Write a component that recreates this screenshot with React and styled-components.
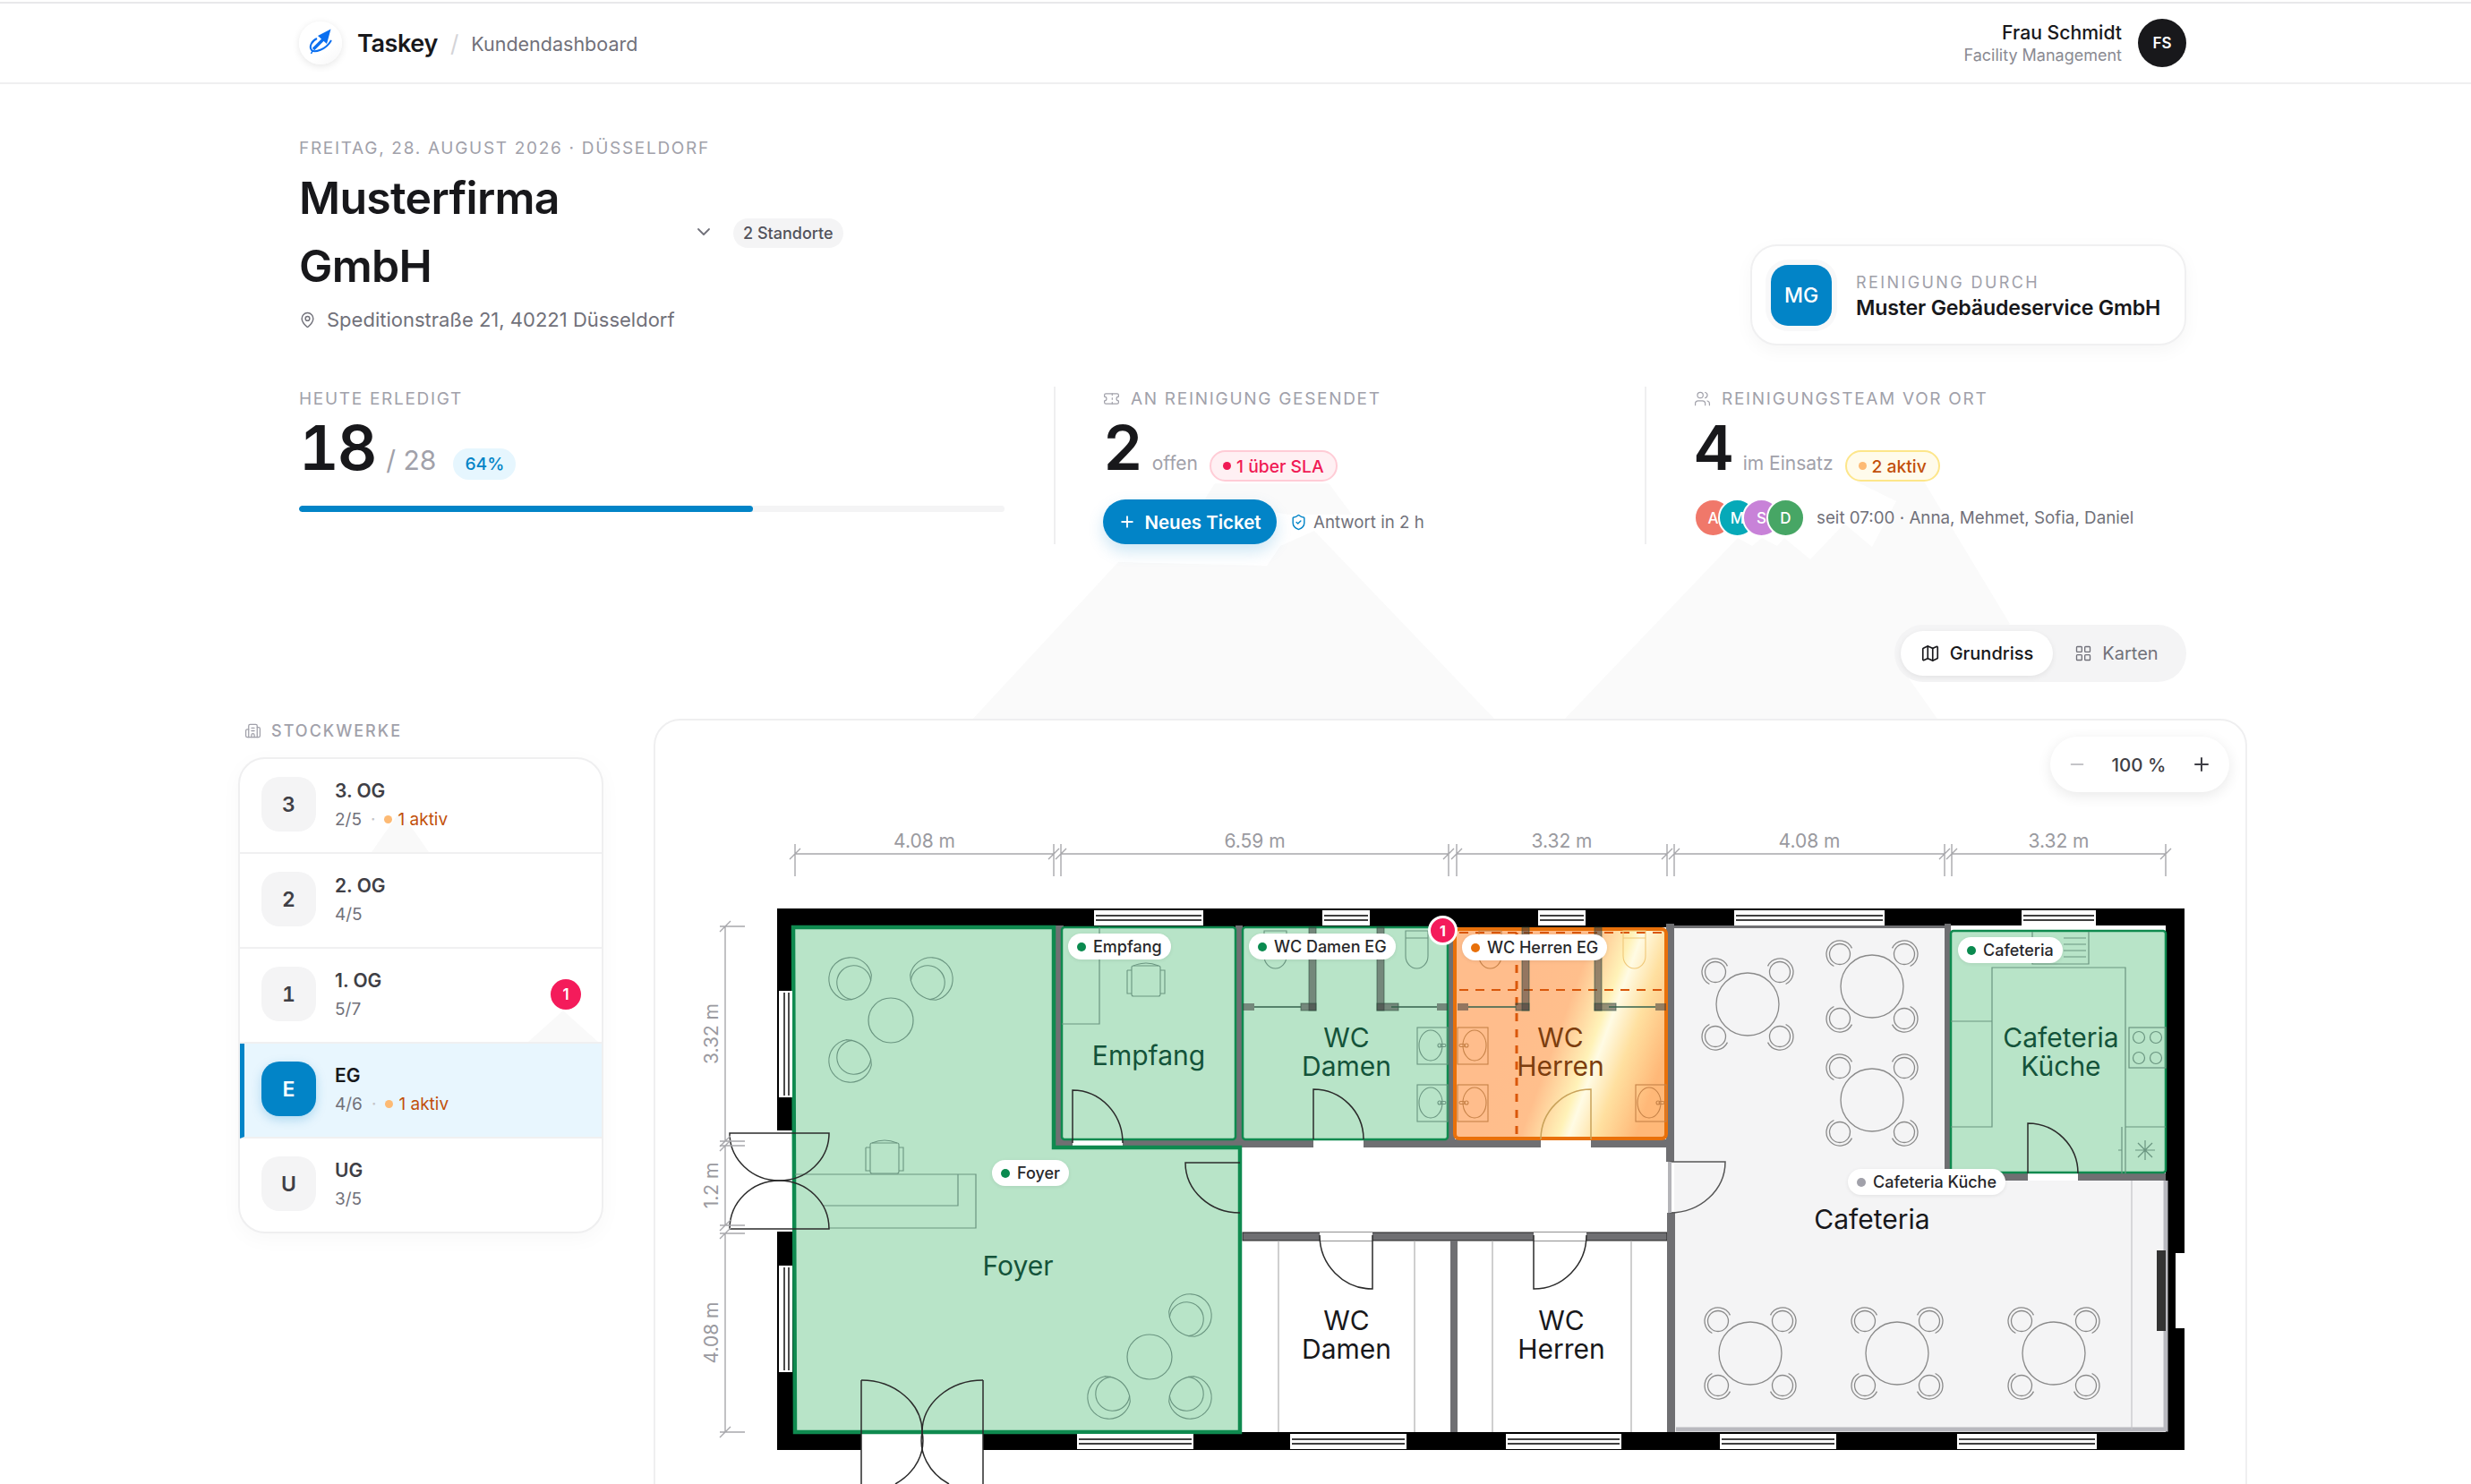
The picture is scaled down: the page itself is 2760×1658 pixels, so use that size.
import React from 'react'
import styled, { createGlobalStyle } from 'styled-components'
import { ChevronDown, MapPin, Ticket, Users, Plus, Minus, ShieldCheck, Map as MapIcon, LayoutGrid, Building2 } from 'lucide-react'

const FLOORS = [
  { badge: '3', name: '3. OG', done: '2/5', active: '1 aktiv', peak: { left: 147, width: 64, height: 46 } },
  { badge: '2', name: '2. OG', done: '4/5' },
  { badge: '1', name: '1. OG', done: '5/7', alert: 1, peak: { left: 322, width: 78, height: 35 } },
  { badge: 'E', name: 'EG', done: '4/6', active: '1 aktiv', selected: true },
  { badge: 'U', name: 'UG', done: '3/5' },
]

const TEAM = [
  { initial: 'A', color: '#f0786a' },
  { initial: 'M', color: '#06a9b8' },
  { initial: 'S', color: '#c882d8' },
  { initial: 'D', color: '#47a665' },
]

const CHIPS = [
  { label: 'Empfang', x: 1193, y: 1044, dot: '#0a8a4f' },
  { label: 'Foyer', x: 1108, y: 1297, dot: '#0a8a4f' },
  { label: 'WC Damen EG', x: 1395, y: 1044, dot: '#0a8a4f' },
  { label: 'WC Herren EG', x: 1633, y: 1045, dot: '#e8700a' },
  { label: 'Cafeteria', x: 2187, y: 1048, dot: '#0a8a4f' },
  { label: 'Cafeteria Küche', x: 2064, y: 1307, dot: '#a1a1aa' },
]

const TOP_WINDOWS = [[1222, 1344], [1477, 1530], [1718, 1771], [1937, 2105], [2258, 2341]]
const BOTTOM_WINDOWS = [[1203, 1333], [1441, 1571], [1682, 1811], [1921, 2051], [2186, 2342]]
const LEFT_WINDOWS = [[1107, 1226], [1414, 1533]]

const DIM_TOP = [
  { from: 888, to: 1177, label: '4.08 m' },
  { from: 1185, to: 1618, label: '6.59 m' },
  { from: 1627, to: 1862, label: '3.32 m' },
  { from: 1870, to: 2172, label: '4.08 m' },
  { from: 2180, to: 2419, label: '3.32 m' },
]

const DIM_LEFT = [
  { from: 1035, to: 1275, label: '3.32 m' },
  { from: 1280, to: 1369, label: '1.2 m' },
  { from: 1378, to: 1600, label: '4.08 m' },
]

const CAFE_TABLES = [
  [1952, 1122, 35], [2091, 1102, 35], [2091, 1229, 35],
  [1955, 1512, 35], [2119, 1512, 35], [2294, 1512, 35],
]

function arcPoint(cx, cy, r, angle) {
  return [cx + r * Math.cos(angle), cy + r * Math.sin(angle)]
}

function CafeTable({ x, y, r }) {
  const offsets = [[-36, -36], [36, -36], [-36, 36], [36, 36]]
  return (
    <g fill='none' stroke='#8a8a8a' strokeWidth='1.3'>
      <circle cx={x} cy={y} r={r} />
      {offsets.map(([dx, dy]) => {
        const cx = x + dx
        const cy = y + dy
        const out = Math.atan2(dy, dx)
        const [ax, ay] = arcPoint(cx, cy, 15, out - 1.9)
        const [bx, by] = arcPoint(cx, cy, 15, out + 1.9)
        return (
          <g key={`${dx}${dy}`}>
            <circle cx={cx} cy={cy} r='11.5' />
            <path d={`M${ax} ${ay} A15 15 0 1 1 ${bx} ${by}`} />
          </g>
        )
      })}
    </g>
  )
}

// lounge chair, rotated so the seat looks at the table
function Armchair({ x, y, tx, ty }) {
  const angle = (Math.atan2(ty - y, tx - x) * 180) / Math.PI - 90
  return (
    <g transform={`translate(${x} ${y}) rotate(${angle})`} fill='none' stroke='#6a9580' strokeWidth='1.1'>
      <path d='M-20 13 A24 24 0 1 1 20 13 L15 17 M-20 13 L-15 17' />
      <path d='M-15 17 A19 19 0 1 1 15 17 Q0 26 -15 17 Z' />
    </g>
  )
}

function OfficeChair({ x, y, stroke }) {
  return (
    <g transform={`translate(${x} ${y})`} fill='none' stroke={stroke} strokeWidth='1.1'>
      <rect x='-16' y='-17' width='32' height='34' rx='2' />
      <path d='M-21 -12 L-16 -12 M-21 -12 L-21 14 L-16 14 M16 -12 L21 -12 L21 14 L16 14' />
      <path d='M-14 -17 Q0 -23 14 -17' />
    </g>
  )
}

function Sink({ x, y, flip, stroke }) {
  const cx = flip ? x + 19 : x + 15
  const tap = flip ? x + 6 : x + 25
  return (
    <g fill='none' stroke={stroke} strokeWidth='1.1'>
      <rect x={x} y={y} width='34' height='41' />
      <ellipse cx={cx} cy={y + 20} rx='13' ry='17' />
      <circle cx={tap + (flip ? 4 : 0)} cy={y + 20} r='2' />
      <rect x={flip ? x + 2 : x + 26} y={y + 18.5} width='6' height='3' rx='1.5' />
    </g>
  )
}

function Toilet({ x, stroke }) {
  return (
    <g fill='none' stroke={stroke} strokeWidth='1.1'>
      <path d={`M${x} 1040 H${x + 25} V1068 A12.5 14 0 0 1 ${x} 1068 Z M${x} 1048 H${x + 25}`} />
    </g>
  )
}

function Stall({ x, foot }) {
  const footX = foot < 0 ? x + foot : x
  const width = 8 + Math.abs(foot)
  return (
    <g fill='#3d3d3d' fillOpacity='0.55' stroke='#2c4d3c' strokeOpacity='0.6' strokeWidth='1'>
      <rect x={x} y='1036' width='8' height='93' />
      <rect x={footX} y='1121' width={width} height='8' />
    </g>
  )
}

function Window({ x1, x2, y1, y2, vertical }) {
  if (vertical) {
    return (
      <g>
        <rect x={x1} y={y1} width={x2 - x1} height={y2 - y1} fill='#fff' />
        <path d={`M${x1 + 6} ${y1 + 2} V${y2 - 2} M${x1 + 11} ${y1 + 2} V${y2 - 2}`} stroke='#000' strokeWidth='1.4' />
      </g>
    )
  }
  return (
    <g>
      <rect x={x1} y={y1} width={x2 - x1} height={y2 - y1} fill='#fff' />
      <path d={`M${x1 + 2} ${y1 + 6} H${x2 - 2} M${x1 + 2} ${y1 + 11} H${x2 - 2}`} stroke='#000' strokeWidth='1.4' />
    </g>
  )
}

function FloorPlan() {
  const line = '#2b2b2b'
  const greenLine = '#6a9580'
  const orangeLine = '#c68248'
  const wall = '#6f6f72'
  return (
    <PlanSvg viewBox='732 805 1776 853' width='1776' height='853'>
      <defs>
        <linearGradient id='heat' gradientUnits='userSpaceOnUse' x1='1699' y1='1119' x2='1869' y2='1181'>
          <stop offset='0' stopColor='#ffbd8c' />
          <stop offset='0.28' stopColor='#ffbf8c' />
          <stop offset='0.5' stopColor='#fff2b8' />
          <stop offset='0.56' stopColor='#fffbe4' />
          <stop offset='0.72' stopColor='#ffe0a0' />
          <stop offset='0.95' stopColor='#ffb878' />
        </linearGradient>
      </defs>

      {/* shell */}
      <rect x='868' y='1015' width='1572' height='605' fill='#000' />
      <rect x='886' y='1036' width='1533' height='564' fill='#fff' />

      {/* cafeteria floor */}
      <path d='M1870 1036 H2179 V1319 H2419 V1600 H1870 Z' fill='#f4f4f5' />
      <path d='M2419 1319 V1597 H1872' fill='none' stroke='#b9b9bf' strokeWidth='5' />
      <path d='M2381 1319 V1597' stroke='#c4c4c8' strokeWidth='1.2' />

      {/* grey walls */}
      <rect x='1177' y='1034' width='11' height='248' fill={wall} />
      <rect x='1380' y='1034' width='8' height='248' fill={wall} />
      <rect x='1617' y='1034' width='8' height='248' fill={wall} />
      <rect x='1861' y='1032' width='9' height='266' fill={wall} />
      <rect x='1177' y='1273' width='693' height='9' fill={wall} />
      <rect x='1870' y='1034' width='302' height='3' fill={wall} />
      <rect x='2172' y='1032' width='7' height='287' fill={wall} />
      <rect x='2172' y='1311' width='247' height='8' fill={wall} />
      <rect x='1388' y='1377' width='474' height='9' fill={wall} stroke='#222' strokeWidth='1' />
      <rect x='1620' y='1386' width='8' height='214' fill={wall} />
      <rect x='1862' y='1355' width='9' height='245' fill={wall} />
      <rect x='2179' y='1034' width='240' height='6' fill='#fff' />

      {/* door openings */}
      <rect x='1198' y='1273' width='56' height='9' fill='#fff' />
      <rect x='1467' y='1273' width='56' height='9' fill='#fff' />
      <rect x='1721' y='1273' width='56' height='9' fill='#fff' />
      <rect x='1474' y='1377' width='59' height='9' fill='#fff' />
      <rect x='1713' y='1377' width='59' height='9' fill='#fff' />
      <rect x='2265' y='1311' width='56' height='8' fill='#fff' />
      <rect x='866' y='1263' width='22' height='113' fill='#fff' />
      <rect x='962' y='1598' width='136' height='24' fill='#fff' />

      {/* rooms */}
      <path d='M886 1036 H1177 V1282 H1385 V1600 H888 Z' fill='#b8e4c8' stroke='#0f8a4f' strokeWidth='4.5' />
      <rect x='1186' y='1036' width='194' height='237' rx='3' fill='#b8e4c8' stroke='#0f8a4f' strokeWidth='2.5' />
      <rect x='1388' y='1036' width='229' height='237' rx='3' fill='#b8e4c8' stroke='#0f8a4f' strokeWidth='2.5' />
      <rect x='2179' y='1040' width='240' height='270' rx='3' fill='#b8e4c8' stroke='#0f8a4f' strokeWidth='2.5' />
      <rect x='1625' y='1038' width='236' height='234' rx='5' fill='url(#heat)' stroke='#e8700a' strokeWidth='4' />
      <path d='M1630 1106 H1860' stroke='#d9570a' strokeWidth='2' strokeDasharray='10 8' />
      <path d='M1694 1042 V1268' stroke='#d9570a' strokeWidth='3' strokeDasharray='9 9' />
      <path d='M1630 1042 H1858' stroke='#d9570a' strokeWidth='2' strokeDasharray='10 8' />

      {/* windows */}
      {TOP_WINDOWS.map(([a, b]) => <Window key={a} x1={a} x2={b} y1={1017} y2={1034} />)}
      {BOTTOM_WINDOWS.map(([a, b]) => <Window key={a} x1={a} x2={b} y1={1602} y2={1619} />)}
      {LEFT_WINDOWS.map(([a, b]) => <Window key={a} vertical x1={870} x2={885} y1={a} y2={b} />)}
      <rect x='2409' y='1397' width='10' height='90' fill='#333' />
      <rect x='2430' y='1400' width='11' height='84' fill='#fff' />

      {/* foyer furniture */}
      <g fill='none' stroke={greenLine} strokeWidth='1.2'>
        <circle cx='995' cy='1140' r='25' />
        <circle cx='1284' cy='1516' r='25' />
        <path d='M888 1312 H1090 V1372 H926 M919 1347 H1070 V1312' />
        <path d='M1228 1036 V1144 H1186' />
        <path d='M2179 1141 H2225 V1081 H2374 V1311 M2225 1141 V1259 H2179 M2374 1259 H2419 M2370 1259 V1311 M2366 1285 H2370' />
        <rect x='2378' y='1148' width='41' height='45' />
        <circle cx='2389' cy='1159' r='6.5' />
        <circle cx='2408' cy='1159' r='6.5' />
        <circle cx='2389' cy='1182' r='6.5' />
        <circle cx='2408' cy='1182' r='6.5' />
        <path d='M2270 1041 V1077 H2333 V1041 M2305 1048 H2330 M2305 1055 H2330 M2305 1062 H2330 M2305 1069 H2330' />
        <path d='M2396 1274 V1296 M2385 1285 H2407 M2388 1277 L2404 1293 M2404 1277 L2388 1293' />
      </g>
      <Armchair x={950} y={1094} tx={995} ty={1140} />
      <Armchair x={1040} y={1094} tx={995} ty={1140} />
      <Armchair x={950} y={1185} tx={995} ty={1140} />
      <Armchair x={1329} y={1470} tx={1284} ty={1516} />
      <Armchair x={1239} y={1561} tx={1284} ty={1516} />
      <Armchair x={1329} y={1561} tx={1284} ty={1516} />
      <OfficeChair x={988} y={1294} stroke={greenLine} />
      <OfficeChair x={1280} y={1096} stroke={greenLine} />

      {/* wc upstairs fittings */}
      <Stall x={1462} foot={-9} />
      <Stall x={1538} foot={16} />
      <Stall x={1700} foot={-7} />
      <Stall x={1781} foot={16} />
      <g fill='#3d3d3d' fillOpacity='0.55'>
        <rect x='1388' y='1121' width='13' height='8' />
        <rect x='1605' y='1121' width='12' height='8' />
        <rect x='1628' y='1121' width='12' height='8' />
        <rect x='1849' y='1121' width='12' height='8' />
      </g>
      <path d='M1401 1125 H1453 M1554 1125 H1605 M1640 1125 H1693 M1797 1125 H1849' stroke='#35624c' strokeWidth='1.4' />
      <Toilet x={1412} stroke={greenLine} />
      <Toilet x={1570} stroke={greenLine} />
      <Toilet x={1652} stroke={orangeLine} />
      <Toilet x={1813} stroke='#f0c878' />
      <Sink x={1583} y={1148} stroke={greenLine} />
      <Sink x={1583} y={1212} stroke={greenLine} />
      <Sink x={1628} y={1148} flip stroke={orangeLine} />
      <Sink x={1628} y={1212} flip stroke={orangeLine} />
      <Sink x={1827} y={1212} stroke={orangeLine} />

      {/* wc downstairs */}
      <path d='M1428 1386 V1600 M1580 1386 V1600 M1667 1386 V1600 M1822 1386 V1600' stroke='#a8a8a8' strokeWidth='1.1' />

      {/* cafeteria tables */}
      {CAFE_TABLES.map(([x, y, r]) => <CafeTable key={`${x}${y}`} x={x} y={y} r={r} />)}

      {/* doors */}
      <g fill='none' stroke={line} strokeWidth='1.5'>
        <path d='M1198 1277 V1218 A56 59 0 0 1 1254 1277' />
        <path d='M1467 1273 V1217 A56 56 0 0 1 1523 1273' />
        <path d='M1777 1273 V1217 A56 56 0 0 0 1721 1273' stroke='#c9a25a' />
        <path d='M2265 1311 V1255 A56 56 0 0 1 2321 1311' />
        <path d='M1533 1380 V1440 A59 60 0 0 1 1474 1380' />
        <path d='M1713 1380 V1440 A59 60 0 0 0 1772 1380' />
        <path d='M1385 1299 H1324 A61 56 0 0 0 1385 1355' />
        <path d='M1865 1298 H1927 A62 57 0 0 1 1865 1355' stroke='#555' />
        <path d='M1865 1298 V1355' stroke='#b4b4b8' strokeWidth='4' />
        <path d='M815 1266 H926 A55.5 53 0 0 1 815 1266 Z' />
        <path d='M815 1373 H926 A55.5 54 0 0 0 815 1373 Z' />
        <path d='M962 1542 V1658 M1098 1542 V1658' />
        <path d='M962 1542 A68 58 0 0 1 1030 1600 A68 58 0 0 1 1000 1658' />
        <path d='M1098 1542 A68 58 0 0 0 1030 1600 A68 58 0 0 0 1060 1658' />
      </g>

      {/* room names */}
      <RoomName x='1283' y='1190' fill='#14533a'>Empfang</RoomName>
      <RoomName x='1137' y='1425' fill='#14533a'>Foyer</RoomName>
      <RoomName x='1504' y='1170' fill='#14533a'>WC</RoomName>
      <RoomName x='1504' y='1202' fill='#14533a'>Damen</RoomName>
      <RoomName x='1743' y='1170' fill='#7c3d0e'>WC</RoomName>
      <RoomName x='1743' y='1202' fill='#7c3d0e'>Herren</RoomName>
      <RoomName x='2302' y='1170' fill='#14533a'>Cafeteria</RoomName>
      <RoomName x='2302' y='1202' fill='#14533a'>Küche</RoomName>
      <RoomName x='2091' y='1373' fill='#18181b'>Cafeteria</RoomName>
      <RoomName x='1504' y='1486' fill='#18181b'>WC</RoomName>
      <RoomName x='1504' y='1518' fill='#18181b'>Damen</RoomName>
      <RoomName x='1744' y='1486' fill='#18181b'>WC</RoomName>
      <RoomName x='1744' y='1518' fill='#18181b'>Herren</RoomName>

      {/* dimensions */}
      <g fill='none' stroke='#a8a8ac' strokeWidth='1.4'>
        {DIM_TOP.map((d) => (
          <path key={d.from} d={`M${d.from} 954 H${d.to} M${d.from} 943 V979 M${d.to} 943 V979 M${d.from - 6} 960 L${d.from + 6} 948 M${d.to - 6} 960 L${d.to + 6} 948`} />
        ))}
        {DIM_LEFT.map((d) => (
          <path key={d.from} d={`M810 ${d.from} V${d.to} M804 ${d.from} H832 M804 ${d.to} H832 M804 ${d.from + 6} L816 ${d.from - 6} M804 ${d.to + 6} L816 ${d.to - 6}`} />
        ))}
      </g>
      {DIM_TOP.map((d) => <DimText key={d.from} x={(d.from + d.to) / 2} y='947'>{d.label}</DimText>)}
      {DIM_LEFT.map((d) => {
        const mid = (d.from + d.to) / 2
        return <DimText key={d.from} x='802' y={mid} transform={`rotate(-90 802 ${mid})`}>{d.label}</DimText>
      })}
    </PlanSvg>
  )
}

function Logo() {
  return (
    <LogoDisc>
      <svg width='48' height='48' viewBox='4 4 48 48' fill='none'>
        <path d='M39.5 12.5 L25 20 L35 29 Z' fill='#0a6ff0' />
        <path d='M31 24 L20 35' stroke='#0a6ff0' strokeWidth='3.4' />
        <path d='M24 23 C18 26 15 32 18 36 C21 39 34 36 40 25' stroke='#0a6ff0' strokeWidth='2' />
        <path d='M17.5 40 L19.5 36' stroke='#0a6ff0' strokeWidth='1.6' />
      </svg>
    </LogoDisc>
  )
}

function App() {
  return (
    <Page>
      <GlobalStyle />
      <Backdrop viewBox='0 0 2760 1658' width='2760' height='1658'>
        <path d='M1084 806 L1249 628 L1415 632 L1430 610 L1468 593 L1672 806 Z' />
        <path d='M1357 540 H1484 L1510 575 H1440 L1345 559 Z' />
        <path d='M1745 806 L1941 601 L1957 610 L1968 601 L1985 610 L1993 601 L2022 625 L2060 585 L2091 611 L2118 560 L2073 538 H2149 L2245 697 L2130 755 L2166 806 Z' />
      </Backdrop>

      <Header>
        <Brand>
          <Logo />
          <BrandName>Taskey</BrandName>
          <BrandSlash>/</BrandSlash>
          <BrandSub>Kundendashboard</BrandSub>
        </Brand>
        <UserBox>
          <UserText>
            <UserName>Frau Schmidt</UserName>
            <UserRole>Facility Management</UserRole>
          </UserText>
          <UserAvatar>FS</UserAvatar>
        </UserBox>
      </Header>

      <Main>
        <Hero>
          <HeroIntro>
            <Eyebrow>FREITAG, 28. AUGUST 2026 · DÜSSELDORF</Eyebrow>
            <TitleRow>
              <Title>Musterfirma GmbH</Title>
              <ChevronDown size={24} color='#71717a' strokeWidth={1.8} />
              <SitesPill>2 Standorte</SitesPill>
            </TitleRow>
            <Address>
              <MapPin size={19} strokeWidth={1.8} />
              Speditionstraße 21, 40221 Düsseldorf
            </Address>
          </HeroIntro>
          <VendorCard>
            <VendorLogo>MG</VendorLogo>
            <div>
              <VendorLabel>REINIGUNG DURCH</VendorLabel>
              <VendorName>Muster Gebäudeservice GmbH</VendorName>
            </div>
          </VendorCard>
        </Hero>

        <Stats>
          <StatCol>
            <StatLabel>HEUTE ERLEDIGT</StatLabel>
            <StatRow>
              <BigNumber>18</BigNumber>
              <StatTotal>/ 28</StatTotal>
              <Pill $bg='#e6f6fe' $color='#0284c7'>64%</Pill>
            </StatRow>
            <Progress>
              <ProgressFill style={{ width: `${(18 / 28) * 100}%` }} />
            </Progress>
          </StatCol>

          <StatCol $divided>
            <StatLabel>
              <Ticket size={19} strokeWidth={1.5} />
              AN REINIGUNG GESENDET
            </StatLabel>
            <StatRow>
              <BigNumber>2</BigNumber>
              <StatNote>offen</StatNote>
              <Pill $bg='#fff0f3' $color='#f01a55' $border='#ffccd6'>
                <PillDot $color='#f01a55' />
                1 über SLA
              </Pill>
            </StatRow>
            <ActionRow>
              <PrimaryButton>
                <Plus size={20} strokeWidth={2.2} />
                Neues Ticket
              </PrimaryButton>
              <ShieldCheck size={19} color='#0284c7' strokeWidth={1.8} />
              <ResponseText>Antwort in 2 h</ResponseText>
            </ActionRow>
          </StatCol>

          <StatCol $divided>
            <StatLabel>
              <Users size={19} strokeWidth={1.5} />
              REINIGUNGSTEAM VOR ORT
            </StatLabel>
            <StatRow>
              <BigNumber>4</BigNumber>
              <StatNote>im Einsatz</StatNote>
              <Pill $bg='#fffbeb' $color='#c2500a' $border='#fde68a'>
                <PillDot $color='#fdba74' />
                2 aktiv
              </Pill>
            </StatRow>
            <TeamRow>
              <Avatars>
                {TEAM.map((m) => <TeamAvatar key={m.initial} $color={m.color}>{m.initial}</TeamAvatar>)}
              </Avatars>
              <TeamText>seit 07:00 · Anna, Mehmet, Sofia, Daniel</TeamText>
            </TeamRow>
          </StatCol>
        </Stats>

        <ViewRow>
          <ViewToggle>
            <ViewButton $active>
              <MapIcon size={22} strokeWidth={1.8} />
              Grundriss
            </ViewButton>
            <ViewButton>
              <LayoutGrid size={20} strokeWidth={1.6} />
              Karten
            </ViewButton>
          </ViewToggle>
        </ViewRow>
      </Main>

      <Workspace>
        <Sidebar>
          <SideLabel>
            <Building2 size={19} strokeWidth={1.6} />
            STOCKWERKE
          </SideLabel>
          <FloorCard>
            {FLOORS.map((f) => (
              <FloorRow key={f.badge} $selected={f.selected}>
                {f.peak && <RowPeak $left={f.peak.left} $width={f.peak.width} $height={f.peak.height} />}
                <FloorBadge $selected={f.selected}>{f.badge}</FloorBadge>
                <FloorText>
                  <FloorName $selected={f.selected}>{f.name}</FloorName>
                  <FloorSub>
                    {f.done}
                    {f.active && (
                      <>
                        <FloorSep>·</FloorSep>
                        <PillDot $color='#fdba74' />
                        <ActiveText>{f.active}</ActiveText>
                      </>
                    )}
                  </FloorSub>
                </FloorText>
                {f.alert && <FloorAlert>{f.alert}</FloorAlert>}
              </FloorRow>
            ))}
          </FloorCard>
        </Sidebar>

        <PlanPanel>
          <FloorPlan />
          <ZoomControl>
            <Minus size={22} color='#c4c4c8' strokeWidth={2} />
            <ZoomValue>100 %</ZoomValue>
            <Plus size={24} color='#3f3f46' strokeWidth={2} />
          </ZoomControl>
          {CHIPS.map((c) => (
            <RoomChip key={c.label} $x={c.x} $y={c.y}>
              <ChipDot $color={c.dot} />
              {c.label}
            </RoomChip>
          ))}
          <PlanAlert>1</PlanAlert>
        </PlanPanel>
      </Workspace>
    </Page>
  )
}

export default App

const GlobalStyle = createGlobalStyle`
  html, body {
    margin: 0;
    height: 100%;
    overflow: hidden;
    background: #fff;
  }
  * {
    box-sizing: border-box;
  }
`

const Page = styled.div`
  position: relative;
  width: 2760px;
  height: 1658px;
  overflow: hidden;
  font-family: Inter, 'Liberation Sans', sans-serif;
  color: #18181b;
`

const Backdrop = styled.svg`
  position: absolute;
  top: 0;
  left: 0;
  fill: #fafafa;
`

const Header = styled.header`
  position: relative;
  height: 92px;
  margin-top: 2px;
  padding: 0 318px 0 334px;
  border-top: 2px solid #e8e8ea;
  border-bottom: 2px solid #efeff0;
  display: flex;
  align-items: center;
  justify-content: space-between;
`

const Brand = styled.div`
  display: flex;
  align-items: center;
`

const LogoDisc = styled.div`
  width: 48px;
  height: 48px;
  border-radius: 50%;
  background: linear-gradient(145deg, #fff 65%, #f6f6f7);
  box-shadow: 0 2px 8px rgba(0, 0, 0, 0.1);
`

const BrandName = styled.span`
  margin-left: 17px;
  font-size: 27px;
  font-weight: 600;
  letter-spacing: -0.4px;
`

const BrandSlash = styled.span`
  margin: 0 14px;
  font-size: 26px;
  color: #d4d4d8;
`

const BrandSub = styled.span`
  margin-top: 2px;
  font-size: 21.5px;
  color: #71717a;
`

const UserBox = styled.div`
  display: flex;
  align-items: center;
  gap: 18px;
`

const UserText = styled.div`
  text-align: right;
`

const UserName = styled.div`
  font-size: 21.2px;
  line-height: 27px;
  font-weight: 500;
`

const UserRole = styled.div`
  font-size: 18px;
  line-height: 24px;
  color: #8a8a92;
`

const UserAvatar = styled.div`
  width: 54px;
  height: 54px;
  border-radius: 50%;
  background: #18181b;
  color: #fff;
  font-size: 17px;
  font-weight: 600;
  display: flex;
  align-items: center;
  justify-content: center;
`

const Main = styled.main`
  position: relative;
  padding: 60px 318px 0 334px;
`

const Hero = styled.section`
  display: flex;
  justify-content: space-between;
  align-items: flex-end;
`

const HeroIntro = styled.div`
  padding-bottom: 14px;
`

const Eyebrow = styled.div`
  font-size: 19px;
  line-height: 24px;
  letter-spacing: 1.7px;
  color: #a1a1aa;
`

const TitleRow = styled.div`
  margin-top: 5px;
  display: flex;
  align-items: center;
  gap: 18px;
`

const Title = styled.h1`
  width: 422px;
  margin: 0;
  font-size: 50px;
  line-height: 76px;
  font-weight: 600;
  letter-spacing: -0.7px;
`

const SitesPill = styled.span`
  height: 33px;
  margin-left: 3px;
  margin-top: 2px;
  padding: 0 11px;
  border-radius: 17px;
  background: #f4f4f5;
  color: #52525b;
  font-size: 18px;
  font-weight: 500;
  display: inline-flex;
  align-items: center;
`

const Address = styled.div`
  margin-top: 7px;
  height: 30px;
  display: flex;
  align-items: center;
  gap: 12px;
  font-size: 22px;
  color: #71717a;
`

const VendorCard = styled.div`
  width: 487px;
  height: 113px;
  padding-left: 21px;
  border: 2px solid #f0f0f1;
  border-radius: 30px;
  background: #fff;
  box-shadow: 0 6px 20px rgba(0, 0, 0, 0.04);
  display: flex;
  align-items: center;
  gap: 27px;
`

const VendorLogo = styled.div`
  width: 68px;
  height: 68px;
  border-radius: 19px;
  background: #0284c7;
  box-shadow: 0 0 0 6px #f8f8f9;
  color: #fff;
  font-size: 23px;
  font-weight: 500;
  display: flex;
  align-items: center;
  justify-content: center;
`

const VendorLabel = styled.div`
  margin-top: 4px;
  font-size: 18px;
  line-height: 24px;
  letter-spacing: 2.4px;
  color: #a1a1aa;
`

const VendorName = styled.div`
  font-size: 23.2px;
  line-height: 32px;
  font-weight: 600;
  letter-spacing: -0.2px;
`

const Stats = styled.section`
  margin-top: 46px;
  display: grid;
  grid-template-columns: 843px 660px 605px;
`

const StatCol = styled.div`
  height: 176px;
  padding: 0 55px 0 ${(p) => (p.$divided ? '53px' : '0')};
  border-left: ${(p) => (p.$divided ? '2px solid #efeff0' : 'none')};
`

const StatLabel = styled.div`
  height: 26px;
  display: flex;
  align-items: center;
  gap: 12px;
  font-size: 19px;
  letter-spacing: 1.7px;
  white-space: nowrap;
  color: #a1a1aa;
`

const StatRow = styled.div`
  margin-top: 7px;
  height: 70px;
  display: flex;
  align-items: baseline;
  gap: 12px;
`

const BigNumber = styled.span`
  font-size: 69px;
  line-height: 70px;
  font-weight: 600;
  letter-spacing: -2px;
  font-variant-numeric: tabular-nums;
`

const StatTotal = styled.span`
  margin-right: 7px;
  font-size: 30px;
  color: #a1a1aa;
`

const StatNote = styled.span`
  margin-right: 1px;
  font-size: 21px;
  color: #a1a1aa;
`

const Pill = styled.span`
  height: 35px;
  padding: 0 13px;
  border-radius: 18px;
  border: ${(p) => (p.$border ? `2px solid ${p.$border}` : 'none')};
  background: ${(p) => p.$bg};
  color: ${(p) => p.$color};
  font-size: 19.3px;
  font-weight: 500;
  display: inline-flex;
  align-items: center;
  gap: 6px;
`

const PillDot = styled.span`
  width: 9px;
  height: 9px;
  border-radius: 50%;
  background: ${(p) => p.$color};
`

const Progress = styled.div`
  margin-top: 30px;
  height: 7px;
  border-radius: 4px;
  background: #f4f4f5;
  overflow: hidden;
`

const ProgressFill = styled.div`
  height: 100%;
  border-radius: 4px;
  background: #0284c7;
`

const ActionRow = styled.div`
  margin-top: 23px;
  display: flex;
  align-items: center;
  gap: 7px;
`

const PrimaryButton = styled.button`
  width: 194px;
  height: 50px;
  margin-right: 8px;
  border: none;
  border-radius: 25px;
  background: #0284c7;
  color: #fff;
  box-shadow: 0 8px 18px rgba(2, 132, 199, 0.2);
  font-family: inherit;
  font-size: 20.5px;
  font-weight: 600;
  display: flex;
  align-items: center;
  justify-content: center;
  gap: 9px;
`

const ResponseText = styled.span`
  font-size: 18.7px;
  color: #71717a;
`

const TeamRow = styled.div`
  margin-top: 23px;
  display: flex;
  align-items: center;
  gap: 13px;
  height: 41px;
`

const Avatars = styled.div`
  display: flex;
`

const TeamAvatar = styled.div`
  width: 43px;
  height: 43px;
  margin-left: -16px;
  border: 2px solid #fff;
  border-radius: 50%;
  background: ${(p) => p.$color};
  color: #fff;
  font-size: 17px;
  font-weight: 500;
  display: flex;
  align-items: center;
  justify-content: center;
  &:first-child {
    margin-left: 0;
  }
`

const TeamText = styled.span`
  font-size: 18.8px;
  color: #71717a;
  white-space: nowrap;
`

const ViewRow = styled.div`
  margin-top: 90px;
  display: flex;
  justify-content: flex-end;
`

const ViewToggle = styled.div`
  width: 326px;
  height: 64px;
  padding: 7px;
  border-radius: 32px;
  background: #f4f4f5;
  display: flex;
  align-items: center;
`

const ViewButton = styled.div`
  width: ${(p) => (p.$active ? '170px' : '142px')};
  height: 50px;
  border-radius: 25px;
  background: ${(p) => (p.$active ? '#fff' : 'transparent')};
  color: ${(p) => (p.$active ? '#18181b' : '#71717a')};
  box-shadow: ${(p) => (p.$active ? '0 2px 6px rgba(0, 0, 0, 0.07)' : 'none')};
  font-size: 20px;
  font-weight: ${(p) => (p.$active ? 500 : 400)};
  display: flex;
  align-items: center;
  justify-content: center;
  gap: 11px;
`

const Workspace = styled.section`
  position: relative;
  margin-top: 41px;
  padding-left: 266px;
  display: grid;
  grid-template-columns: 408px 1780px;
  column-gap: 56px;
  align-items: start;
`

const Sidebar = styled.aside``

const SideLabel = styled.div`
  height: 18px;
  margin-top: 4px;
  margin-bottom: 21px;
  padding-left: 7px;
  display: flex;
  align-items: center;
  gap: 11px;
  font-size: 18px;
  font-weight: 500;
  letter-spacing: 2px;
  color: #a1a1aa;
`

const FloorCard = styled.div`
  border: 2px solid #efeff0;
  border-radius: 30px;
  background: #fff;
  box-shadow: 0 6px 24px rgba(0, 0, 0, 0.03);
  overflow: hidden;
`

const FloorRow = styled.div`
  position: relative;
  padding: 20px 23px 23px ${(p) => (p.$selected ? '19px' : '24px')};
  border-left: ${(p) => (p.$selected ? '5px solid #0284c7' : 'none')};
  border-bottom: 2px solid #f0f0f1;
  background: ${(p) => (p.$selected ? '#e8f6fe' : 'transparent')};
  display: flex;
  align-items: center;
  gap: 21px;
  &:last-child {
    padding-bottom: 23px;
    border-bottom: none;
  }
`

const RowPeak = styled.span`
  position: absolute;
  bottom: 0;
  left: ${(p) => p.$left}px;
  width: ${(p) => p.$width}px;
  height: ${(p) => p.$height}px;
  background: #f9f9f9;
  clip-path: polygon(50% 0, 100% 100%, 0 100%);
`

const FloorBadge = styled.div`
  position: relative;
  width: 61px;
  height: 61px;
  border-radius: 20px;
  background: ${(p) => (p.$selected ? '#0284c7' : '#f4f4f5')};
  color: ${(p) => (p.$selected ? '#fff' : '#3f3f46')};
  box-shadow: ${(p) => (p.$selected ? '0 4px 12px rgba(2, 132, 199, 0.25)' : 'none')};
  font-size: 23px;
  font-weight: 600;
  font-variant-numeric: tabular-nums;
  display: flex;
  align-items: center;
  justify-content: center;
`

const FloorText = styled.div`
  position: relative;
  flex: 1;
  height: 61px;
  display: flex;
  flex-direction: column;
  gap: 2px;
`

const FloorName = styled.div`
  font-size: 21px;
  line-height: 32px;
  font-weight: 600;
  color: ${(p) => (p.$selected ? '#18181b' : '#3f3f46')};
`

const FloorSub = styled.div`
  height: 27px;
  font-size: 19px;
  color: #71717a;
  display: flex;
  align-items: center;
`

const FloorSep = styled.span`
  margin: 0 10px;
  color: #c4c4c8;
`

const ActiveText = styled.span`
  margin-left: 6px;
  color: #c2500a;
`

const FloorAlert = styled.span`
  width: 34px;
  height: 34px;
  border-radius: 50%;
  background: #f41b5b;
  color: #fff;
  font-size: 17px;
  font-weight: 600;
  display: flex;
  align-items: center;
  justify-content: center;
`

const PlanPanel = styled.div`
  position: relative;
  height: 900px;
  border: 2px solid #efeff0;
  border-radius: 30px;
  background: #fff;
  overflow: hidden;
`

const PlanSvg = styled.svg`
  display: block;
`

const RoomName = styled.text`
  font-family: Inter, 'Liberation Sans', sans-serif;
  font-size: 30px;
  text-anchor: middle;
`

const DimText = styled.text`
  font-family: Inter, 'Liberation Sans', sans-serif;
  font-size: 21px;
  fill: #9a9aa0;
  text-anchor: middle;
`

const ZoomControl = styled.div`
  position: absolute;
  top: 18px;
  right: 18px;
  width: 200px;
  height: 62px;
  padding: 0 19px;
  border-radius: 31px;
  background: #fff;
  box-shadow: 0 4px 16px rgba(0, 0, 0, 0.09);
  display: flex;
  align-items: center;
  justify-content: space-between;
`

const ZoomValue = styled.span`
  font-size: 20.5px;
  font-weight: 500;
  color: #3f3f46;
`

const RoomChip = styled.div`
  position: absolute;
  left: ${(p) => p.$x - 732}px;
  top: ${(p) => p.$y - 806}px;
  height: 29px;
  padding: 0 10px 0 10px;
  border-radius: 15px;
  background: #fff;
  box-shadow: 0 1px 4px rgba(0, 0, 0, 0.08);
  font-size: 18px;
  font-weight: 500;
  white-space: nowrap;
  color: #27272a;
  display: flex;
  align-items: center;
  gap: 8px;
`

const ChipDot = styled.span`
  width: 10px;
  height: 10px;
  border-radius: 50%;
  background: ${(p) => p.$color};
`

const PlanAlert = styled.span`
  position: absolute;
  left: ${1595 - 732}px;
  top: ${1024 - 806}px;
  width: 33px;
  height: 33px;
  border: 3px solid #fff;
  border-radius: 50%;
  background: #f41b5b;
  color: #fff;
  font-size: 16px;
  font-weight: 700;
  display: flex;
  align-items: center;
  justify-content: center;
`
